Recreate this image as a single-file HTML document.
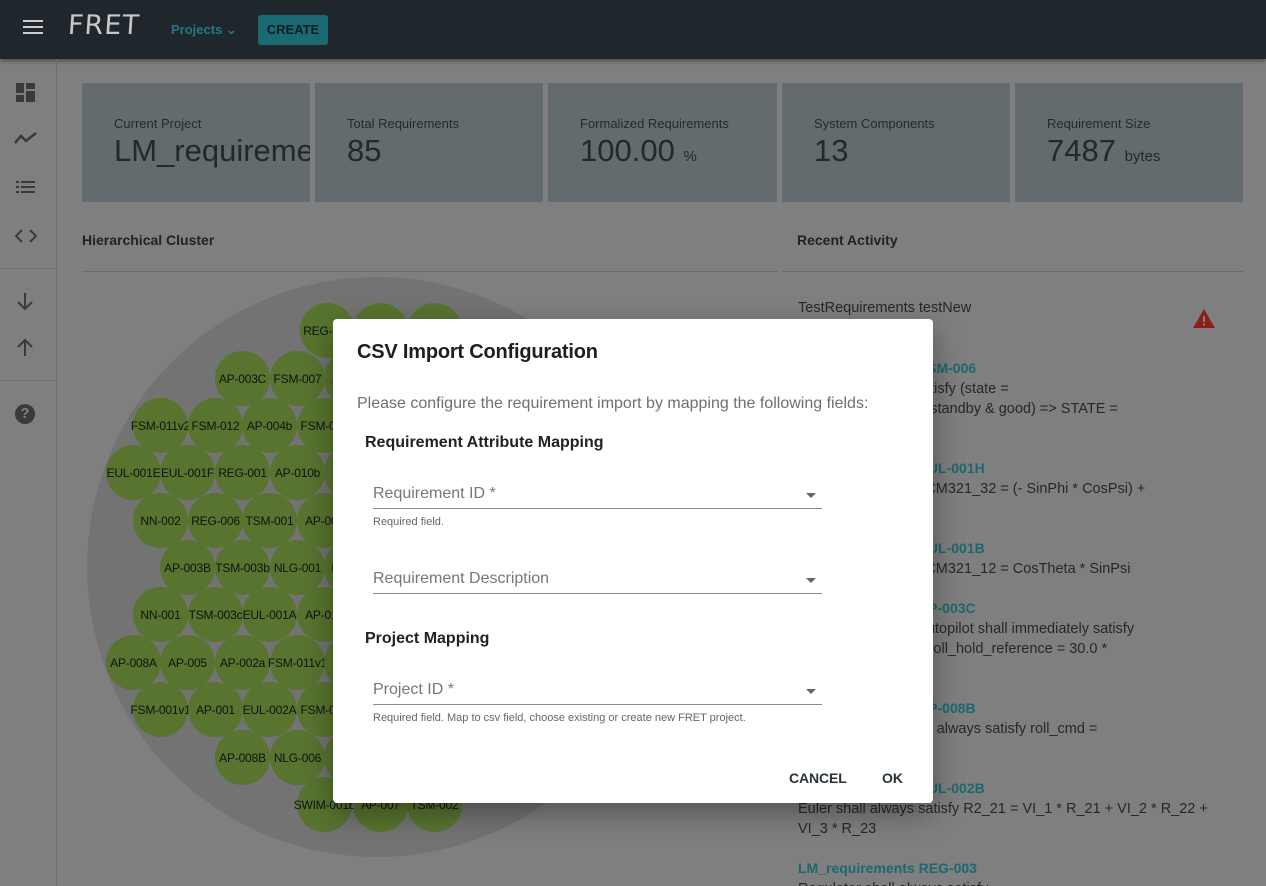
<!DOCTYPE html>
<html style="overflow:hidden;height:886px"><head><meta charset="utf-8"><style>
*{margin:0;padding:0;box-sizing:border-box}
body{width:1266px;height:886px;overflow:hidden;background:#7f7f7f;font-family:"Liberation Sans",sans-serif;position:relative;color:#1f2428}
.abs{position:absolute}
#hdr{left:0;top:0;width:1266px;height:59px;background:#1f272c;box-shadow:0 2px 4px rgba(0,0,0,.4)}
#side{left:0;top:59px;width:57px;height:827px;border-right:1px solid #6f6f6f}
.card{position:absolute;top:83px;height:119px;background:#646b6f}
.card .l{position:absolute;left:32px;top:33px;font-size:13px;color:#24292d}
.card .v{position:absolute;left:32px;top:50px;font-size:31px;color:#22292d;white-space:nowrap}
.card .v small{font-size:15px}
.c{position:absolute;width:55px;height:55px;border-radius:50%;background:#58742f;font-size:12px;color:#111;display:flex;align-items:center;justify-content:center;white-space:nowrap;letter-spacing:-.2px}
.ra{position:absolute;left:798px;font-size:14.5px;line-height:20px;color:#24282b;width:440px}
.ra b{color:#1c6870;font-weight:bold;font-size:14px}
#dlg{left:333px;top:319px;width:600px;height:484px;background:#fff;border-radius:4px;box-shadow:0 10px 30px rgba(0,0,0,.35)}
.fld{position:absolute;left:40px;width:449px;border-bottom:1px solid #8a8a8a;font-size:16px;color:#777;height:32px}
.fld span{position:absolute;left:0;top:8px}
.fld i{position:absolute;right:6px;top:16px;border-left:5px solid transparent;border-right:5px solid transparent;border-top:5px solid #666}
.help{position:absolute;left:40px;font-size:11px;color:#666}
</style></head><body>
<div id="hdr" class="abs">
 <svg class="abs" style="left:23px;top:20px" width="20" height="14"><rect y="0" width="20" height="2" fill="#ccc"/><rect y="6" width="20" height="2" fill="#ccc"/><rect y="12" width="20" height="2" fill="#ccc"/></svg>
 <div class="abs" style="left:68px;top:10px;font-size:27px;color:#c8c8c8;font-family:'DejaVu Sans',sans-serif;letter-spacing:1px;transform:skewX(-4deg)">FRET</div>
 <div class="abs" style="left:171px;top:22px;font-size:13px;font-weight:bold;color:#1e7a85">Projects ⌄</div>
 <div class="abs" style="left:258px;top:15px;width:70px;height:30px;background:#1b6a73;border-radius:3px;color:#0e1d21;font-size:13px;font-weight:bold;text-align:center;line-height:30px">CREATE</div>
</div>
<div id="side" class="abs">
 <svg class="abs" style="left:16px;top:24px" width="19" height="19" fill="#3a3a3a"><rect x="0" y="0" width="8" height="10"/><rect x="10" y="0" width="9" height="6"/><rect x="0" y="12" width="8" height="7"/><rect x="10" y="8" width="9" height="11"/></svg>
 <svg class="abs" style="left:14px;top:72px" width="23" height="14"><path d="M1 12 L7 5 L12 10 L22 2" stroke="#3a3a3a" stroke-width="2.5" fill="none"/></svg>
 <svg class="abs" style="left:16px;top:122px" width="19" height="12" fill="#3a3a3a"><rect y="0" width="3" height="2"/><rect x="5" y="0" width="14" height="2"/><rect y="5" width="3" height="2"/><rect x="5" y="5" width="14" height="2"/><rect y="10" width="3" height="2"/><rect x="5" y="10" width="14" height="2"/></svg>
 <svg class="abs" style="left:15px;top:170px" width="22" height="14"><path d="M7 1 L1 7 L7 13 M15 1 L21 7 L15 13" stroke="#3a3a3a" stroke-width="2" fill="none"/></svg>
 <div class="abs" style="left:0;top:209px;width:57px;border-top:1px solid #6f6f6f"></div>
 <svg class="abs" style="left:16px;top:233px" width="18" height="18"><path d="M9 1 V16 M2 10 L9 17 L16 10" stroke="#3a3a3a" stroke-width="2" fill="none"/></svg>
 <svg class="abs" style="left:16px;top:280px" width="18" height="18"><path d="M9 17 V2 M2 8 L9 1 L16 8" stroke="#3a3a3a" stroke-width="2" fill="none"/></svg>
 <div class="abs" style="left:0;top:321px;width:57px;border-top:1px solid #6f6f6f"></div>
 <div class="abs" style="left:15px;top:345px;width:20px;height:20px;border-radius:50%;background:#3a3a3a;color:#7f7f7f;font-size:15px;font-weight:bold;text-align:center;line-height:20px">?</div>
</div>
<div class="card" style="left:82px;width:228px;overflow:hidden"><div class="l">Current Project</div><div class="v">LM_requirements</div></div>
<div class="card" style="left:315px;width:228px"><div class="l">Total Requirements</div><div class="v">85</div></div>
<div class="card" style="left:548px;width:229px"><div class="l">Formalized Requirements</div><div class="v">100.00 <small>%</small></div></div>
<div class="card" style="left:782px;width:228px"><div class="l">System Components</div><div class="v">13</div></div>
<div class="card" style="left:1015px;width:228px"><div class="l">Requirement Size</div><div class="v">7487 <small>bytes</small></div></div>
<div class="abs" style="left:82px;top:232px;font-size:14px;font-weight:bold;color:#222">Hierarchical Cluster</div>
<div class="abs" style="left:797px;top:232px;font-size:14px;font-weight:bold;color:#222">Recent Activity</div>
<div class="abs" style="left:82px;top:271px;width:695px;border-top:1px solid #6c6c6c"></div>
<div class="abs" style="left:782px;top:271px;width:461px;border-top:1px solid #6c6c6c"></div>
<div class="abs" style="left:87px;top:277px;width:580px;height:580px;border-radius:50%;background:#737373"></div>
<div id="circles">
<div class="c" style="left:300px;top:303px">REG-002</div><div class="c" style="left:353px;top:303px"></div><div class="c" style="left:407px;top:303px"></div>
<div class="c" style="left:215px;top:351px">AP-003C</div><div class="c" style="left:270px;top:351px">FSM-007</div><div class="c" style="left:324px;top:351px">AP-004</div>
<div class="c" style="left:133px;top:398px">FSM-011v2</div><div class="c" style="left:188px;top:398px">FSM-012</div><div class="c" style="left:242px;top:398px">AP-004b</div><div class="c" style="left:297px;top:398px">FSM-008</div>
<div class="c" style="left:106px;top:445px">EUL-001E</div><div class="c" style="left:160px;top:445px">EUL-001F</div><div class="c" style="left:215px;top:445px">REG-001</div><div class="c" style="left:270px;top:445px">AP-010b</div><div class="c" style="left:324px;top:445px"></div>
<div class="c" style="left:133px;top:493px">NN-002</div><div class="c" style="left:188px;top:493px">REG-006</div><div class="c" style="left:242px;top:493px">TSM-001</div><div class="c" style="left:297px;top:493px">AP-003</div>
<div class="c" style="left:160px;top:540px">AP-003B</div><div class="c" style="left:215px;top:540px">TSM-003b</div><div class="c" style="left:270px;top:540px">NLG-001</div><div class="c" style="left:324px;top:540px">NN-003</div>
<div class="c" style="left:133px;top:587px">NN-001</div><div class="c" style="left:188px;top:587px">TSM-003c</div><div class="c" style="left:242px;top:587px">EUL-001A</div><div class="c" style="left:297px;top:587px">AP-010</div>
<div class="c" style="left:106px;top:635px">AP-008A</div><div class="c" style="left:160px;top:635px">AP-005</div><div class="c" style="left:215px;top:635px">AP-002a</div><div class="c" style="left:270px;top:635px">FSM-011v1</div><div class="c" style="left:324px;top:635px">SWIM</div>
<div class="c" style="left:133px;top:682px">FSM-001v1</div><div class="c" style="left:188px;top:682px">AP-001</div><div class="c" style="left:242px;top:682px">EUL-002A</div><div class="c" style="left:297px;top:682px">FSM-003</div>
<div class="c" style="left:215px;top:730px">AP-008B</div><div class="c" style="left:270px;top:730px">NLG-006</div><div class="c" style="left:324px;top:730px">FSM</div>
<div class="c" style="left:297px;top:777px">SWIM-001b</div><div class="c" style="left:353px;top:777px">AP-007</div><div class="c" style="left:407px;top:777px">TSM-002</div>
</div>
<div class="ra" style="top:298px">TestRequirements testNew<br>"test requirement"</div>
<svg class="abs" style="left:1192px;top:308px" width="24" height="21"><path d="M12 1 L23 20 H1 Z" fill="#8a1f1a"/><rect x="11" y="8" width="2" height="6" fill="#7f7f7f"/><rect x="11" y="15.5" width="2" height="2" fill="#7f7f7f"/></svg>
<div class="ra" style="top:358px"><b>LM_requirements FSM-006</b><br>FSM shall always satisfy (state =<br>ap_standby_state &amp; standby &amp; good) => STATE =<br>ap_standby_state</div>
<div class="ra" style="top:458px"><b>LM_requirements EUL-001H</b><br>Euler shall satisfy DCM321_32 = (- SinPhi * CosPsi) +<br>(CosPhi * SinPsi)</div>
<div class="ra" style="top:538px"><b>LM_requirements EUL-001B</b><br>Euler shall satisfy DCM321_12 = CosTheta * SinPsi</div>
<div class="ra" style="top:598px"><b>LM_requirements AP-003C</b><br>When in roll_hold, Autopilot shall immediately satisfy<br>abs(roll) >= 30.0 => roll_hold_reference = 30.0 *<br>sign(roll)</div>
<div class="ra" style="top:698px"><b>LM_requirements AP-008B</b><br>LateralAutopilot shall always satisfy roll_cmd =<br>...</div>
<div class="ra" style="top:778px"><b>LM_requirements EUL-002B</b><br>Euler shall always satisfy R2_21 = VI_1 * R_21 + VI_2 * R_22 +<br>VI_3 * R_23</div>
<div class="ra" style="top:858px"><b>LM_requirements REG-003</b><br>Regulator shall always satisfy</div>
<div id="dlg" class="abs">
 <div class="abs" style="left:24px;top:22px;font-size:20px;font-weight:bold;color:#1e1e1e;letter-spacing:-.2px">CSV Import Configuration</div>
 <div class="abs" style="left:24px;top:76px;font-size:16px;color:#6f6f6f">Please configure the requirement import by mapping the following fields:</div>
 <div class="abs" style="left:32px;top:115px;font-size:16px;font-weight:bold;color:#222">Requirement Attribute Mapping</div>
 <div class="fld" style="top:158px"><span>Requirement ID *</span><i></i></div>
 <div class="help" style="top:197px">Required field.</div>
 <div class="fld" style="top:243px"><span>Requirement Description</span><i></i></div>
 <div class="abs" style="left:32px;top:311px;font-size:16px;font-weight:bold;color:#222">Project Mapping</div>
 <div class="fld" style="top:354px"><span>Project ID *</span><i></i></div>
 <div class="help" style="top:393px">Required field. Map to csv field, choose existing or create new FRET project.</div>
 <div class="abs" style="left:456px;top:451px;font-size:14px;font-weight:bold;color:#2a3338;letter-spacing:-.1px">CANCEL</div>
 <div class="abs" style="left:549px;top:451px;font-size:14px;font-weight:bold;color:#2a3338">OK</div>
</div>
</body></html>
